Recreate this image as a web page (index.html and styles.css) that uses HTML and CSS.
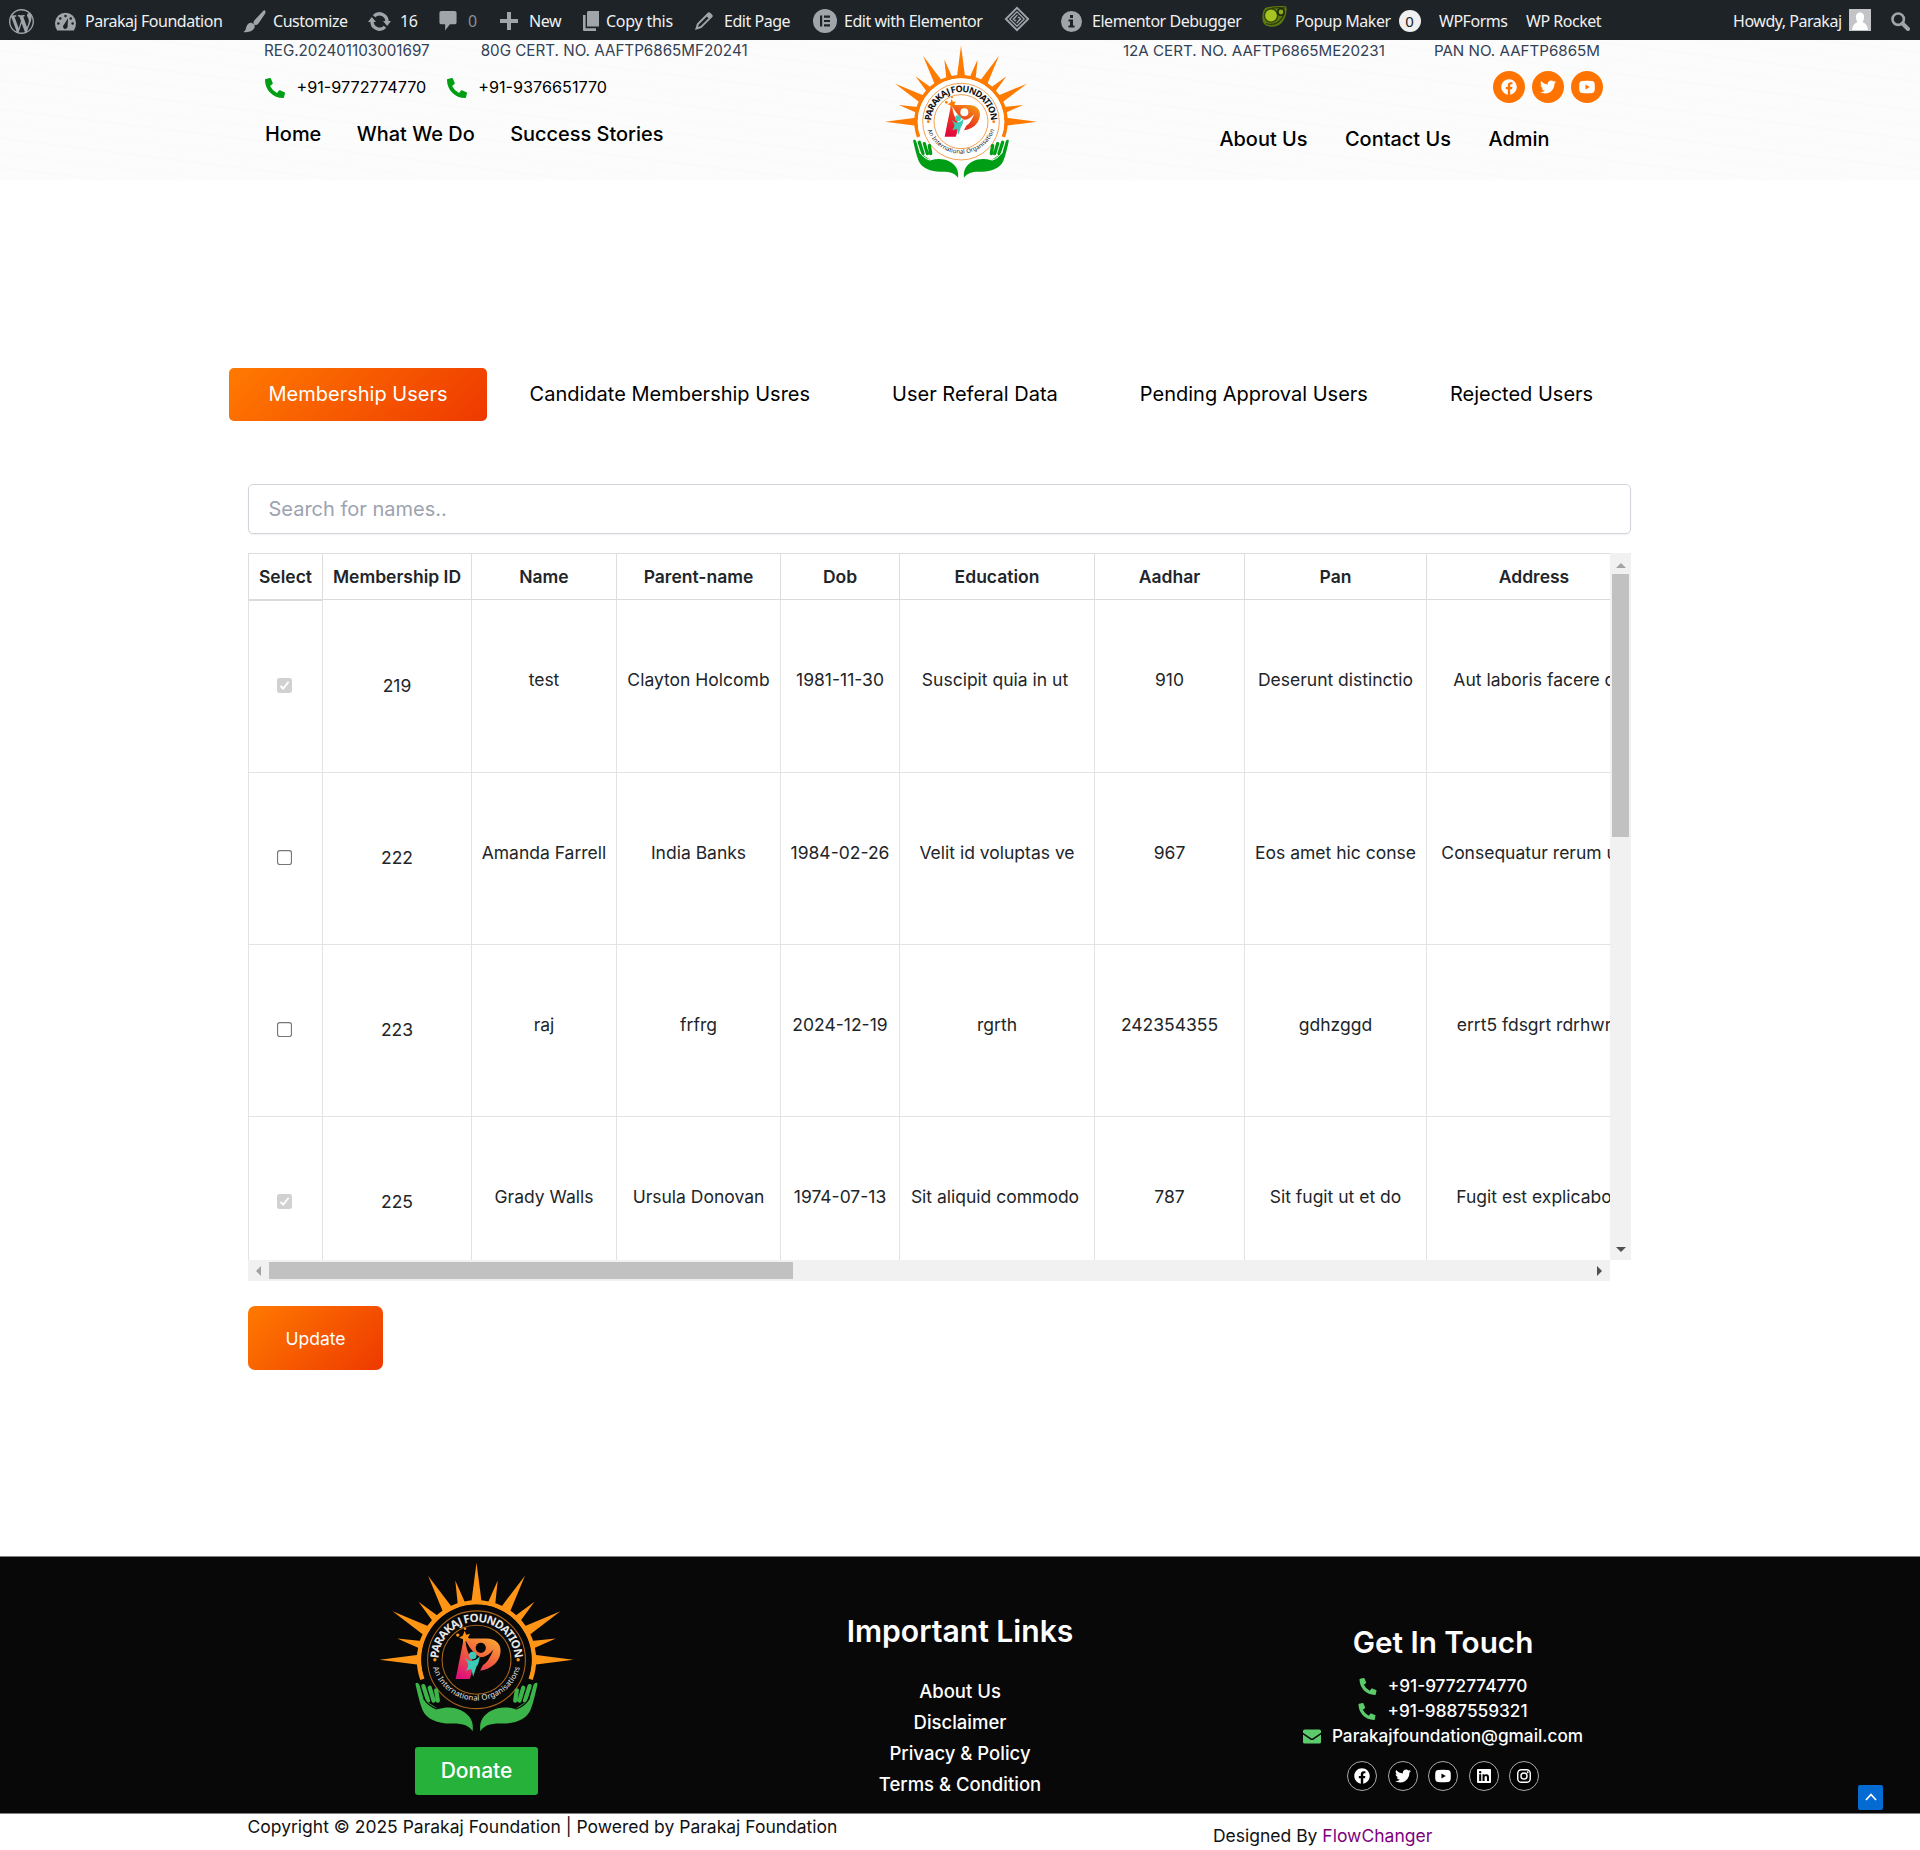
FILE: index.html
```html
<!DOCTYPE html>
<html lang="en">
<head>
<meta charset="utf-8">
<title>Membership Users – Parakaj Foundation</title>
<link rel="stylesheet" href="styles.css">
</head>
<body>
<svg class="defs" width="0" height="0">
  <defs>
    <linearGradient id="pfill" x1="0.8" y1="0" x2="0.2" y2="1"><stop offset="0" stop-color="#f59315"/><stop offset=".5" stop-color="#ea3a1e"/><stop offset="1" stop-color="#e2063f"/></linearGradient>
    <linearGradient id="pfill2" x1="0.8" y1="0" x2="0.2" y2="1"><stop offset="0" stop-color="#f9a132"/><stop offset=".5" stop-color="#f0593f"/><stop offset="1" stop-color="#e0107a"/></linearGradient>
    <path id="arc-top" d="M-88 20A90 90 0 1 1 88 20"/>
    <path id="arc-bottom" d="M-106 -10A106 106 0 0 0 106 -10"/>
    <path id="big" d="M-12 -136L0 -228L12 -136Z"/>
    <path id="small" d="M-9 -136L0 -193L9 -136Z"/>
    <symbol id="mark" viewBox="-228 -230 456 400">
      <g class="sun">
        <use href="#big"/><use href="#big" transform="rotate(30)"/><use href="#big" transform="rotate(60)"/><use href="#big" transform="rotate(90)"/><use href="#big" transform="rotate(-30)"/><use href="#big" transform="rotate(-60)"/><use href="#big" transform="rotate(-90)"/>
        <use href="#small" transform="rotate(15)"/><use href="#small" transform="rotate(45)"/><use href="#small" transform="rotate(75)"/><use href="#small" transform="rotate(-15)"/><use href="#small" transform="rotate(-45)"/><use href="#small" transform="rotate(-75)"/>
      </g>
      <path class="sun-ring" d="M-127 46A135 135 0 1 1 127 46"/>
      <circle class="disc" r="130"/>
      <circle class="ring" r="115"/><circle class="ring" r="81"/>
      <circle class="dot" cx="-98" r="4"/><circle class="dot" cx="98" r="4"/>
      <path d="M-49 45L-30 -50H22C50 -50 60 -32 56 -14C52 8 34 22 8 26L2 45Z" class="pee"/>
      <path class="cut" d="M-26 -46Q-8 -12 10 -6Q26 -6 40 -24Q28 6 16 12Q6 26 4 46L-16 46Q-6 20 -10 0Q-24 -18 -26 -46Z"/>
      <circle class="cut" cx="10" cy="-28" r="12"/>
      <circle class="teal" cx="-9" cy="-10" r="9"/>
      <path class="teal" d="M-28 -6Q-16 6 -8 2Q2 0 8 -10Q6 10 0 16L-8 40L-12 22L-26 26Q-18 18 -20 8Z"/>
      <path class="sun" d="M-28 -68L-24 -59L-15 -61L-20 -53L-14 -45L-24 -47L-30 -39L-32 -49L-41 -52L-32 -57Z"/>
      <circle class="dot" cx="-44" cy="-58" r="4"/><circle class="dot" cx="-27" cy="-73" r="3"/>
      <g class="hand">
        <path d="M-143 60C-146 52 -136 52 -134 60L-124 94L-90 116C-60 106 -28 116 -14 138C-8 148 -8 158 -9 168C-22 150 -40 150 -62 150C-90 150 -118 140 -127 118C-134 100 -138 82 -143 60Z"/>
        <path class="finger" d="M-125 62L-114 96M-110 66L-101 96M-95 72L-91 96"/><path class="crease" d="M-124 90Q-116 108 -92 116"/>
      </g>
      <g class="hand" transform="scale(-1 1)">
        <path d="M-143 60C-146 52 -136 52 -134 60L-124 94L-90 116C-60 106 -28 116 -14 138C-8 148 -8 158 -9 168C-22 150 -40 150 -62 150C-90 150 -118 140 -127 118C-134 100 -138 82 -143 60Z"/>
        <path class="finger" d="M-125 62L-114 96M-110 66L-101 96M-95 72L-91 96"/><path class="crease" d="M-124 90Q-116 108 -92 116"/>
      </g>
    </symbol>
    <symbol id="phone" viewBox="0 0 512 512"><path d="M497.39 361.8l-112-48a24 24 0 0 0-28 6.9l-49.6 60.6A370.66 370.66 0 0 1 130.6 204.11l60.6-49.6a23.94 23.94 0 0 0 6.9-28l-48-112A24.16 24.16 0 0 0 122.6.61l-104 24A24 24 0 0 0 0 48c0 256.5 207.9 464 464 464a24 24 0 0 0 23.4-18.6l24-104a24.29 24.29 0 0 0-14.01-27.6z"/></symbol>
    <symbol id="facebook" viewBox="0 0 512 512"><path d="M504 256C504 119 393 8 256 8S8 119 8 256c0 123.78 90.69 226.38 209.25 245V327.69h-63V256h63v-54.64c0-62.15 37-96.48 93.67-96.48 27.14 0 55.52 4.84 55.52 4.84v61h-31.28c-30.8 0-40.41 19.12-40.41 38.73V256h68.78l-11 71.69h-57.78V501C413.31 482.38 504 379.78 504 256z"/></symbol>
    <symbol id="twitter" viewBox="0 0 512 512"><path d="M459.37 151.716c.325 4.548.325 9.097.325 13.645 0 138.72-105.583 298.558-298.558 298.558-59.452 0-114.68-17.219-161.137-47.106 8.447.974 16.568 1.299 25.34 1.299 49.055 0 94.213-16.568 130.274-44.832-46.132-.975-84.792-31.188-98.112-72.772 6.498.974 12.995 1.624 19.818 1.624 9.421 0 18.843-1.3 27.614-3.573-48.081-9.747-84.143-51.98-84.143-102.985v-1.299c13.969 7.797 30.214 12.67 47.431 13.319-28.264-18.843-46.781-51.005-46.781-87.391 0-19.492 5.197-37.36 14.294-52.954 51.655 63.675 129.3 105.258 216.365 109.807-1.624-7.797-2.599-15.918-2.599-24.04 0-57.828 46.782-104.934 104.934-104.934 30.213 0 57.502 12.67 76.67 33.137 23.715-4.548 46.456-13.32 66.599-25.34-7.798 24.366-24.366 44.833-46.132 57.827 21.117-2.273 41.584-8.122 60.426-16.243-14.292 20.791-32.161 39.308-52.628 54.253z"/></symbol>
    <symbol id="youtube" viewBox="0 0 512 512"><path fill-rule="evenodd" d="M90 66Q256 50 422 66Q496 72 502 150Q510 256 502 362Q496 440 422 446Q256 462 90 446Q16 440 10 362Q2 256 10 150Q16 72 90 66ZM206 176V336L346 256Z"/></symbol>
    <symbol id="linkedin" viewBox="0 0 448 512"><path d="M416 32H31.9C14.3 32 0 46.5 0 64.3v383.4C0 465.5 14.3 480 31.9 480H416c17.6 0 32-14.5 32-32.3V64.3c0-17.8-14.4-32.3-32-32.3zM135.4 416H69V202.2h66.5V416zm-33.2-243c-21.3 0-38.5-17.3-38.5-38.5S80.9 96 102.2 96c21.2 0 38.5 17.3 38.5 38.5 0 21.3-17.2 38.5-38.5 38.5zm282.1 243h-66.4V312c0-24.8-.5-56.7-34.5-56.7-34.6 0-39.9 27-39.9 54.9V416h-66.4V202.2h63.7v29.2h.9c8.9-16.8 30.6-34.5 62.9-34.5 67.2 0 79.7 44.3 79.7 101.9V416z"/></symbol>
    <symbol id="instagram" viewBox="0 0 20 20"><rect x="2.2" y="2.2" width="15.6" height="15.6" rx="4.5" fill="none" stroke="currentColor" stroke-width="1.8"/><circle cx="10" cy="10" r="3.8" fill="none" stroke="currentColor" stroke-width="1.8"/><circle cx="14.6" cy="5.4" r="1.2"/></symbol>
    <symbol id="checked" viewBox="0 0 16 16"><rect width="16" height="16" rx="2.5" fill="#d1d1d1"/><path d="M3.6 8.4L6.6 11.4L12.4 4" fill="none" stroke="#fff" stroke-width="2"/></symbol>
    <symbol id="unchecked" viewBox="0 0 16 16"><rect x=".6" y=".6" width="14.8" height="14.8" rx="2.4" fill="#fff" stroke="#767676" stroke-width="1.2"/></symbol>
  </defs>
</svg>

<nav class="adminbar">
  <a class="ab"><svg class="i25" viewBox="0 0 20 20"><path fill-rule="evenodd" d="M20 10c0-5.51-4.49-10-10-10C4.48 0 0 4.49 0 10c0 5.52 4.48 10 10 10 5.51 0 10-4.48 10-10zM7.78 15.37L4.37 6.22c.55-.02 1.17-.08 1.17-.08.5-.06.44-1.13-.06-1.11 0 0-1.45.11-2.37.11-.18 0-.37 0-.58-.01C4.12 2.69 6.87 1.11 10 1.11c2.33 0 4.45.87 6.05 2.34-.68-.11-1.65.39-1.65 1.58 0 .74.45 1.36.9 2.1.35.61.55 1.36.55 2.46 0 1.49-1.4 5-1.4 5l-3.03-8.37c.54-.02.82-.17.82-.17.5-.05.44-1.25-.06-1.22 0 0-1.44.12-2.38.12-.87 0-2.33-.12-2.33-.12-.5-.03-.56 1.2-.06 1.22l.92.08 1.26 3.41zM17.41 10c.24-.64.74-1.87.43-4.25.7 1.29 1.05 2.71 1.05 4.25 0 3.29-1.73 6.24-4.4 7.78.97-2.59 1.94-5.2 2.92-7.78zM6.1 18.09C3.12 16.65 1.11 13.53 1.11 10c0-1.3.23-2.48.72-3.59C3.25 10.3 4.67 14.2 6.1 18.09zm4.03-6.63l2.58 6.98c-.86.29-1.76.45-2.71.45-.79 0-1.57-.11-2.29-.33.81-2.38 1.62-4.74 2.42-7.1z"/></svg></a>
  <a class="ab g9"><svg class="i21" viewBox="0 0 20 17"><path d="M2 17Q0 14 0 10.200A10 10 0 0 1 20 10.200Q20 14 18 17Z"/><g fill="#1d2327"><circle cx="3.200" cy="10.500" r="1.200"/><circle cx="5" cy="5.600" r="1.200"/><circle cx="10" cy="3.200" r="1.200"/><circle cx="15" cy="5.600" r="1.200"/><circle cx="16.800" cy="10.500" r="1.200"/><path d="M12.400 5.500L12 13A2.200 2.200 0 1 1 8.500 11.600Z"/></g></svg><span>Parakaj Foundation</span></a>
  <a class="ab g7"><svg class="i23" viewBox="0 0 22 22"><path d="M21 .4C22 1 21.600 2.600 20.800 4L14.600 13.200C13.400 14.600 11.800 14.800 10.700 13.800C9.600 12.800 9.800 11 11 9.800L19 1.200Q20.200 0 21 .4ZM9 12.600C11 13.600 11.600 15 11 16.800C9.800 20.600 4.600 21.800 .4 21C3.400 19.600 2.400 16.800 4.200 14.200C5.400 12.400 7.200 11.800 9 12.600Z"/></svg><span>Customize</span></a>
  <a class="ab g9"><svg class="i23" viewBox="0 0 23 20"><path d="M19 10.200A7.600 7.600 0 0 0 6 4.600M4 9.800A7.600 7.600 0 0 0 17 15.400" fill="none" stroke="currentColor" stroke-width="3.400"/><path d="M15 9.400H23L19.200 14.400ZM8 10.600H0L3.800 5.600Z"/></svg><span>16</span></a>
  <a class="ab g11 dim"><svg class="i18" viewBox="0 0 18 21"><path d="M2 0H16Q18 0 18 2V12Q18 14 16 14H11L6 20.500V14H2Q0 14 0 12V2Q0 0 2 0Z"/></svg><span>0</span></a>
  <a class="ab g11"><svg class="i18" viewBox="0 0 18 18"><path d="M7 0H11V7H18V11H11V18H7V11H0V7H7Z"/></svg><span>New</span></a>
  <a class="ab g7 wide"><svg class="i16" viewBox="0 0 16 20"><path d="M5 0H16V15.500H4V1ZM0 4H2.600V17.200H13V20H1Q0 20 0 19Z"/></svg><span>Copy this</span></a>
  <a class="ab g11"><svg class="i18" viewBox="0 0 18 18"><path fill-rule="evenodd" d="M13 .6Q14 -.3 15.200 .8L17.200 2.800Q18.300 4 17.400 5L6.400 16L0 18L2 11.600ZM3.800 12.500L3 15L5.500 14.200L13.600 6.200L11.800 4.400Z"/></svg><span>Edit Page</span></a>
  <a class="ab g7"><svg class="i24" viewBox="0 0 24 24"><circle cx="12" cy="12" r="12"/><path fill="#1d2327" d="M7 6.500H9.200V17.500H7ZM11 6.500H17V8.700H11ZM11 10.900H17V13.100H11ZM11 15.300H17V17.500H11Z"/></svg><span>Edit with Elementor</span></a>
  <a class="ab up"><svg class="i26" viewBox="0 0 26 26"><path d="M13 .5L25.500 13L13 25.500L.5 13Z"/><path d="M13 4L22 13L13 22L4 13ZM13 7.500L18.500 13L13 18.500L7.500 13Z" fill="none" stroke="#1d2327" stroke-width="1.100"/><path d="M14.500 9.500L11.500 13H14.500L11.500 16.500" fill="none" stroke="#1d2327" stroke-width="1.300"/></svg></a>
  <a class="ab g10"><svg class="i21" viewBox="0 0 21 21"><circle cx="10.500" cy="10.500" r="10.500"/><path fill="#1d2327" d="M9 4H12V7H9ZM7.500 8.500H12V14.500H13.500V16.500H7.500V14.500H9V10.500H7.500Z"/></svg><span>Elementor Debugger</span></a>
  <a class="ab g8"><svg class="i25 lift" viewBox="0 0 25 22"><path d="M4 2Q12 0 22 .6Q25.500 1 24.500 5Q24 12 20 17Q16 22 7 21Q0 20 .4 12Q.4 4 4 2Z" fill="#5d7a10"/><path d="M3 6Q10 1 23 2.500M4 18Q16 22 22 9" fill="none" stroke="#2b3a0c" stroke-width="1.300"/><circle cx="9" cy="10" r="6.600" fill="#a6c422" stroke="#33440c" stroke-width="1.400"/><circle cx="19" cy="6.500" r="3.200" fill="#8dab1c" stroke="#1d2a08" stroke-width="1.600"/></svg><span>Popup Maker</span><b class="badge">0</b></a>
  <a class="ab"><span>WPForms</span></a>
  <a class="ab"><span>WP Rocket</span></a>
  <a class="ab g7"><span>Howdy, Parakaj</span><svg class="i22 up1" viewBox="0 0 22 22"><rect width="22" height="22" fill="#c3c4c7"/><path fill="#fff" d="M11 3.500C14 3.500 15.500 6 15 9Q14.500 12 13.500 13Q18.500 15 19 21H3Q3.500 15 8.500 13Q7.500 12 7 9C6.500 6 8 3.500 11 3.500Z"/></svg></a>
  <a class="ab"><svg class="i19" viewBox="0 0 19 19"><circle cx="7.200" cy="7.200" r="5.700" fill="none" stroke="currentColor" stroke-width="2.600"/><path d="M11.500 11.500L17 17" stroke="currentColor" stroke-width="4" stroke-linecap="round"/></svg></a>
</nav>

<header class="site-header">
  <div class="col">
    <div class="certs left"><span>REG.202401103001697</span><span>80G CERT. NO. AAFTP6865MF20241</span></div>
    <div class="phones"><svg><use href="#phone"/></svg><span>+91-9772774770</span><svg class="second"><use href="#phone"/></svg><span>+91-9376651770</span></div>
    <div class="menu"><a>Home</a><a>What We Do</a><a>Success Stories</a></div>
  </div>
  <svg class="logo light" viewBox="-228 -230 456 400"><use href="#mark" x="-228" y="-230" width="456" height="400"/>
    <text class="name"><textPath href="#arc-top" startOffset="50%" text-anchor="middle" textLength="274">PARAKAJ FOUNDATION</textPath></text>
    <text class="org"><textPath href="#arc-bottom" startOffset="50%" text-anchor="middle" textLength="262">An International Organisation</textPath></text></svg>
  <div class="col end">
    <div class="certs right"><span>12A CERT. NO. AAFTP6865ME20231</span><span>PAN NO. AAFTP6865M</span></div>
    <div class="socials"><a><svg><use href="#facebook"/></svg></a><a><svg><use href="#twitter"/></svg></a><a><svg><use href="#youtube"/></svg></a></div>
    <div class="menu low"><a>About Us</a><a>Contact Us</a><a>Admin</a></div>
  </div>
</header>

<main>
  <div class="tabs"><a class="active">Membership Users</a><a>Candidate Membership Usres</a><a>User Referal Data</a><a>Pending Approval Users</a><a>Rejected Users</a></div>
  <div class="panel">
    <input class="search" type="text" placeholder="Search for names..">
    <div class="scroller">
      <div class="viewport">
        <table>
          <colgroup><col class="c1"><col class="c2"><col class="c3"><col class="c4"><col class="c5"><col class="c6"><col class="c7"><col class="c8"><col class="c9"></colgroup>
          <thead><tr><th>Select</th><th>Membership ID</th><th>Name</th><th>Parent-name</th><th>Dob</th><th>Education</th><th>Aadhar</th><th>Pan</th><th>Address</th></tr></thead>
          <tbody>
            <tr><td><svg><use href="#checked"/></svg></td><td>219</td><td>test</td><td>Clayton Holcomb</td><td>1981-11-30</td><td class="trail">Suscipit quia in ut</td><td>910</td><td>Deserunt distinctio</td><td>Aut laboris facere c</td></tr>
            <tr><td><svg><use href="#unchecked"/></svg></td><td>222</td><td>Amanda Farrell</td><td>India Banks</td><td>1984-02-26</td><td>Velit id voluptas ve</td><td>967</td><td>Eos amet hic conse</td><td class="trail">Consequatur rerum ut</td></tr>
            <tr><td><svg><use href="#unchecked"/></svg></td><td>223</td><td>raj</td><td>frfrg</td><td>2024-12-19</td><td>rgrth</td><td>242354355</td><td>gdhzggd</td><td>errt5 fdsgrt rdrhwr</td></tr>
            <tr><td><svg><use href="#checked"/></svg></td><td>225</td><td>Grady Walls</td><td>Ursula Donovan</td><td>1974-07-13</td><td class="trail">Sit aliquid commodo</td><td>787</td><td>Sit fugit ut et do</td><td>Fugit est explicabo</td></tr>
          </tbody>
        </table>
      </div>
      <div class="vbar"><i class="arrow au"></i><i class="vthumb"></i><i class="arrow ad"></i></div>
      <div class="hbar"><i class="arrow al"></i><i class="hthumb"></i><i class="arrow ar"></i></div>
    </div>
    <button class="update">Update</button>
  </div>
</main>

<footer class="site-footer">
  <div class="brand">
    <svg class="logo dark" viewBox="-228 -230 456 400"><use href="#mark" x="-228" y="-230" width="456" height="400"/>
      <text class="name"><textPath href="#arc-top" startOffset="50%" text-anchor="middle" textLength="274">PARAKAJ FOUNDATION</textPath></text>
      <text class="org"><textPath href="#arc-bottom" startOffset="50%" text-anchor="middle" textLength="276">An International Organisations</textPath></text></svg>
    <a class="donate">Donate</a>
  </div>
  <div class="links"><h2>Important Links</h2><a>About Us</a><a>Disclaimer</a><a>Privacy &amp; Policy</a><a>Terms &amp; Condition</a></div>
  <div class="touch"><h2>Get In Touch</h2>
    <p><svg><use href="#phone"/></svg>+91-9772774770</p>
    <p><svg><use href="#phone"/></svg>+91-9887559321</p>
    <p><svg viewBox="0 0 18 16"><path d="M1.500 1H16.500Q18 1 18 2.500V4.200L9.800 9.800Q9 10.300 8.200 9.800L0 4.200V2.500Q0 1 1.500 1ZM0 6L7.600 11.200Q9 12 10.400 11.200L18 6V13.500Q18 15 16.500 15H1.500Q0 15 0 13.500Z"/></svg>Parakajfoundation@gmail.com</p>
    <div class="rings"><a><svg><use href="#facebook"/></svg></a><a><svg><use href="#twitter"/></svg></a><a><svg><use href="#youtube"/></svg></a><a><svg><use href="#linkedin"/></svg></a><a><svg><use href="#instagram"/></svg></a></div>
  </div>
  <a class="to-top"><svg viewBox="0 0 12 8"><path d="M1 7L6 1.500L11 7" fill="none" stroke="#fff" stroke-width="1.700"/></svg></a>
</footer>
<div class="copyright"><span>Copyright © 2025 Parakaj Foundation | Powered by Parakaj Foundation</span><span class="by">Designed By <a>FlowChanger</a></span></div>
</body>
</html>
```
FILE: styles.css
```css
*{box-sizing:border-box}
body{margin:0;width:1920px;height:1850px;overflow:hidden;background:#fff;font:17.5px/1.5 Inter,sans-serif;color:#212529;display:flex;flex-direction:column}
.defs{position:absolute}
svg{flex:none;fill:currentColor}

.adminbar{height:40px;flex:none;background:#1d2327;color:#a0a5aa;padding-left:9px;display:grid;grid-template-columns:46px 188px 125px 71px 61px 83px 112px 118px 191px 57px 201px 177px 87px 207px 158px 30px;font:16px/40px "Noto Sans",sans-serif;letter-spacing:-.47px}
.ab{display:flex;align-items:center;height:42px;white-space:nowrap}
.ab span{color:#f0f0f1}
.ab.dim span{color:#8a8f94}
.wide{letter-spacing:-.25px}
.g7{gap:7px}.g8{gap:8px}.g9{gap:9px}.g10{gap:10px}.g11{gap:11px}
.i16{width:16px;height:20px}.i18{width:18px;height:20px}.i19{width:19px;height:19px}.i21{width:21px;height:21px}.i22{width:22px;height:22px}.i23{width:23px;height:23px}.i24{width:24px;height:24px}.i25{width:25px;height:25px}.i26{width:26px;height:26px}
.up{height:38px}
.up1{margin-bottom:2px}
.lift{margin-bottom:9px}
.badge{font-weight:400;background:#f0f0f1;color:#1d2327;width:22px;height:22px;border-radius:11px;line-height:22px;text-align:center;font-size:15px;letter-spacing:0}

.site-header{height:140px;flex:none;padding:0 320px 0 264px;display:flex;justify-content:space-between;color:#000;background:repeating-linear-gradient(187deg,#fcfcfc 0 11px,#fafafa 12px 13px,#fcfcfc 14px 26px,#fbfbfb 27px 29px)}
.col{width:490px;white-space:nowrap}
.col.end{display:flex;flex-direction:column;align-items:flex-end}
.certs{height:22px;display:flex;align-items:center;color:#334155;font-size:15.2px}
.certs.left{gap:51px}
.certs.right{gap:49px;font-size:15.15px}
.phones{height:50px;display:flex;align-items:center;font-size:16.2px;padding-left:1px}
.phones svg{width:20px;height:20px;fill:#009e15;margin-right:11.5px;margin-top:2px}
.phones .second{margin-left:20.5px}
.menu{height:45px;display:flex;align-items:center;gap:35.5px;font-size:19.95px;font-weight:500;padding-left:1px}
.menu.low{height:55px;gap:37.5px;padding-right:50.5px}
.socials{height:50px;display:flex;align-items:center;gap:7px;margin-right:-3px}
.socials a{width:32px;height:32px;border-radius:50%;background:#ff7300;color:#fff;display:flex;align-items:center;justify-content:center}
.socials svg{width:16px;height:16px}
.logo.light{width:152px;height:133.3px;margin:5px 0 0 57px}
.logo{--sun:#ff7b00;--bg:#fff;--hand:#009e15;--ring:#f58a2a;--ink:#111;--pee:url(#pfill)}
.logo.dark{--sun:#ff9415;--bg:#080808;--hand:#3bb54a;--ring:#a8651a;--ink:#e8e8e8;--pee:url(#pfill2)}
.sun,.dot{fill:var(--sun)}
.sun-ring{fill:none;stroke:var(--sun);stroke-width:11}
.disc{fill:var(--bg)}
.ring{fill:none;stroke:var(--ring);stroke-width:2.5}
.pee{fill:var(--pee)}
.cut{fill:var(--bg)}
.teal{fill:#3cc9b8}
.hand{fill:var(--hand)}
.finger{fill:none;stroke:var(--hand);stroke-width:10;stroke-linecap:round}
.crease{fill:none;stroke:var(--bg);stroke-width:3}
.name{font:700 27px "Noto Sans",sans-serif;fill:var(--ink)}
.org{font:400 18px "Noto Sans",sans-serif;fill:var(--ink)}

main{height:1376px;flex:none;padding-top:188px}
.tabs{display:flex;gap:2px;margin-left:229px;height:53px;color:#000;font-size:20px;white-space:nowrap}
.tabs a{padding:0 40px;line-height:53px}
.tabs .active{width:258px;margin-right:.6px;padding:0 39.5px;color:#fff;border-radius:5px;background:linear-gradient(135deg,#ff7a00,#ee3900)}
.panel{margin:63px 0 0 248px;width:1383px}
.search{display:block;width:100%;height:50px;border:1px solid #d1d5db;border-radius:5px;padding:0 19.5px;font:20px Inter,sans-serif;box-shadow:0 1px 2px rgba(0,0,0,.06)}
.search::placeholder{color:#9ca3af;opacity:1}
.scroller{margin-top:19px;display:grid;grid-template:707px 21px/1362px 21px}
.viewport{overflow:hidden}
table{width:1393px;table-layout:fixed;border-collapse:separate;border-spacing:0;text-align:center}
.c1{width:74px}.c2{width:149px}.c3{width:145px}.c4{width:164px}.c5{width:119px}.c6{width:195px}.c7{width:150px}.c8{width:182px}.c9{width:215px}
th{height:46px;padding:1px 0 0;font-weight:600;border:solid #ddd;border-width:1px 0 0 1px}
td{height:172px;padding:0 0 11px;border:solid #e2e3e5;border-width:1px 0 0 1px;white-space:nowrap}
td.trail{padding-right:4px}
tbody tr:first-child td{height:173px;border-top-color:#d9dadb}
tbody tr:first-child td:first-child{border-top-width:2px}
td:nth-child(2){padding:0}
td:first-child{padding:0 2px 2px 0}
td svg{width:15px;height:15px;display:block;margin:0 auto}
.vbar,.hbar{background:#f1f1f1;display:flex;align-items:center}
.vbar{flex-direction:column}
.vthumb{width:17px;height:263px;background:#c1c1c1;margin-top:6px}
.hthumb{height:17px;width:524px;background:#c1c1c1;margin-left:8px}
.arrow{border:5px solid transparent;flex:none}
.au{border-bottom-color:#a3a3a3;border-top:0;margin-top:10px}
.ad{border-top-color:#505050;border-bottom:0;margin:auto 0 8px}
.al{border-right-color:#a3a3a3;border-left:0;margin-left:8px}
.ar{border-left-color:#505050;border-right:0;margin:0 8px 0 auto}
.update{display:block;margin-top:25px;width:135px;height:64px;border:0;border-radius:7px;color:#fff;font:17.5px Inter,sans-serif;background:linear-gradient(135deg,#ff7a00,#ee3900)}

.site-footer{position:relative;height:258px;flex:none;background:#080808;border:solid #808080;border-width:1px 0;color:#fff;display:grid;grid-template-columns:952px 16px 952px}
.brand{width:195px;margin:5px 0 0 379px;display:flex;flex-direction:column;align-items:center}
.logo.dark{width:195px;height:170px}
.donate{width:123px;height:48px;margin-top:15px;border-radius:3px;background:#25b13a;text-align:center;font:500 21px/48px Inter,sans-serif}
.links{display:flex;flex-direction:column;align-items:center;width:300px;margin-left:-142px;padding-top:50px;font-size:18.5px;font-weight:500;line-height:31px}
h2{margin:0;font:600 30.1px/48px Inter,sans-serif}
.links h2{margin-bottom:20.5px}
.touch{margin-left:325px;width:300px;padding-top:60.5px;display:flex;flex-direction:column;align-items:center;font-weight:500;font-size:17.2px}
.touch h2{font-size:29.7px;margin-bottom:8px}
.touch p{margin:0;height:25px;display:flex;align-items:center;gap:11px}
.touch p svg{width:18px;height:17px;fill:#5ccb6c}
.rings{display:flex;gap:10.5px;margin-top:12.5px}
.rings a{width:30px;height:30px;border:1.5px solid #aaa;border-radius:50%;background:#000;display:flex;align-items:center;justify-content:center}
.rings svg{width:16px;height:16px}
.to-top{position:absolute;left:1858px;top:228px;width:25px;height:25px;background:#046bd2;border-radius:2px;display:flex;justify-content:center}
.to-top svg{width:12px;height:8px;margin-top:8px}
.copyright{height:36px;flex:none;padding-left:247.5px;display:flex;align-items:flex-start;color:#111;line-height:25px;white-space:nowrap}
.copyright .by{margin:9px 0 0 375.5px}
.copyright a{color:#800080}
```
